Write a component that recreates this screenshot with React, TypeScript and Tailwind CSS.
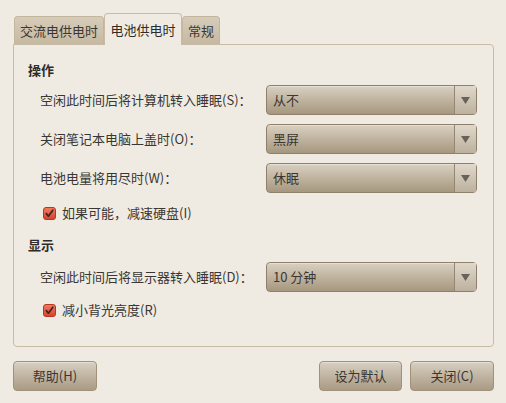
import React from 'react'

const font = { fontFamily: '"Noto Sans CJK SC", "Noto Sans", sans-serif' }

function Combo({ value }: { value: string }) {
  return (
    <div className="flex h-[30px] w-[211px] items-stretch rounded-[4px] border border-[#8f806c] bg-gradient-to-b from-[#d9d0c1] to-[#a6987f] text-[13px] text-[#3a3632] shadow-[inset_0_1px_0_rgba(255,255,255,0.35)]">
      <div className="flex flex-1 items-center pl-[6px]">{value}</div>
      <div className="flex w-[22px] items-center justify-center border-l border-[#948671] bg-gradient-to-b from-[#e0d8cb] to-[#bdb19e]">
        <svg width="9" height="7" viewBox="0 0 9 7">
          <path d="M0 0 H9 L4.5 7 Z" fill="#6a625a" />
        </svg>
      </div>
    </div>
  )
}

function Row({ label, value }: { label: string; value: string }) {
  return (
    <div className="flex items-center">
      <div className="w-[252px] pl-[26px] text-[13px] text-[#3a3632]">{label}</div>
      <Combo value={value} />
    </div>
  )
}

function Check({ label }: { label: string }) {
  return (
    <div className="flex h-[20px] items-center pl-[29px] text-[13px] text-[#3a3632]">
      <svg width="13" height="13" viewBox="0 0 13 13" className="mr-[6px]">
        <defs>
          <linearGradient id="cb" x1="0" y1="0" x2="0" y2="1">
            <stop offset="0" stopColor="#f27a60" />
            <stop offset="1" stopColor="#d6432c" />
          </linearGradient>
        </defs>
        <rect x="0.5" y="0.5" width="12" height="12" rx="2.5" fill="url(#cb)" stroke="#b5381f" />
        <path d="M3.3 6.6 L5.4 9.2 L9.8 3.2" fill="none" stroke="#3b2422" strokeWidth="1.7" strokeLinecap="round" strokeLinejoin="round" />
      </svg>
      {label}
    </div>
  )
}

function Button({ label, w }: { label: string; w: string }) {
  return (
    <button
      className={`${w} h-[30px] rounded-[4px] border border-[#a19179] bg-gradient-to-b from-[#d8cfc1] to-[#a99b84] text-[13px] text-[#3a3632] shadow-[inset_0_1px_0_rgba(255,255,255,0.35)]`}
    >
      {label}
    </button>
  )
}

export default function App() {
  return (
    <div className="h-[403px] w-[506px] overflow-hidden bg-[#efebe3] pt-[13px]" style={font}>
      <div className="flex items-end pl-[14px]">
        <div className="flex h-[28px] w-[90px] items-center justify-center rounded-t-[4px] border border-b-0 border-[#c3b69f] bg-gradient-to-b from-[#d6ccb9] to-[#c6b9a2] text-[13px] text-[#3a3632]">
          交流电供电时
        </div>
        <div className="relative z-10 -mb-px flex h-[32px] w-[78px] items-center justify-center rounded-t-[4px] border border-b-0 border-[#c8bca6] bg-[#efebe3] text-[13px] text-[#2e2b28]">
          电池供电时
        </div>
        <div className="flex h-[28px] w-[38px] items-center justify-center rounded-t-[4px] border border-b-0 border-[#c3b69f] bg-gradient-to-b from-[#d6ccb9] to-[#c6b9a2] text-[13px] text-[#3a3632]">
          常规
        </div>
      </div>
      <div className="mx-[13px] flex h-[303px] w-[481px] flex-col rounded-b-[4px] rounded-tr-[4px] border border-[#c8bca6] pt-[16px]">
        <div className="h-[18px] pl-[14px] text-[13px] font-bold leading-[18px] text-[#2e2b28]">操作</div>
        <div className="mt-[6px] flex flex-col gap-[9px]">
          <Row label="空闲此时间后将计算机转入睡眠(S)：" value="从不" />
          <Row label="关闭笔记本电脑上盖时(O)：" value="黑屏" />
          <Row label="电池电量将用尽时(W)：" value="休眠" />
        </div>
        <div className="mt-[10px]">
          <Check label="如果可能，减速硬盘(I)" />
        </div>
        <div className="mt-[13px] h-[18px] pl-[14px] text-[13px] font-bold leading-[18px] text-[#2e2b28]">显示</div>
        <div className="mt-[8px]">
          <Row label="空闲此时间后将显示器转入睡眠(D)：" value="10 分钟" />
        </div>
        <div className="mt-[8px]">
          <Check label="减小背光亮度(R)" />
        </div>
      </div>
      <div className="mx-[13px] mt-[14px] flex w-[481px] items-center">
        <Button label="帮助(H)" w="w-[84px]" />
        <div className="flex-1" />
        <Button label="设为默认" w="w-[83px]" />
        <div className="w-[8px]" />
        <Button label="关闭(C)" w="w-[84px]" />
      </div>
    </div>
  )
}
